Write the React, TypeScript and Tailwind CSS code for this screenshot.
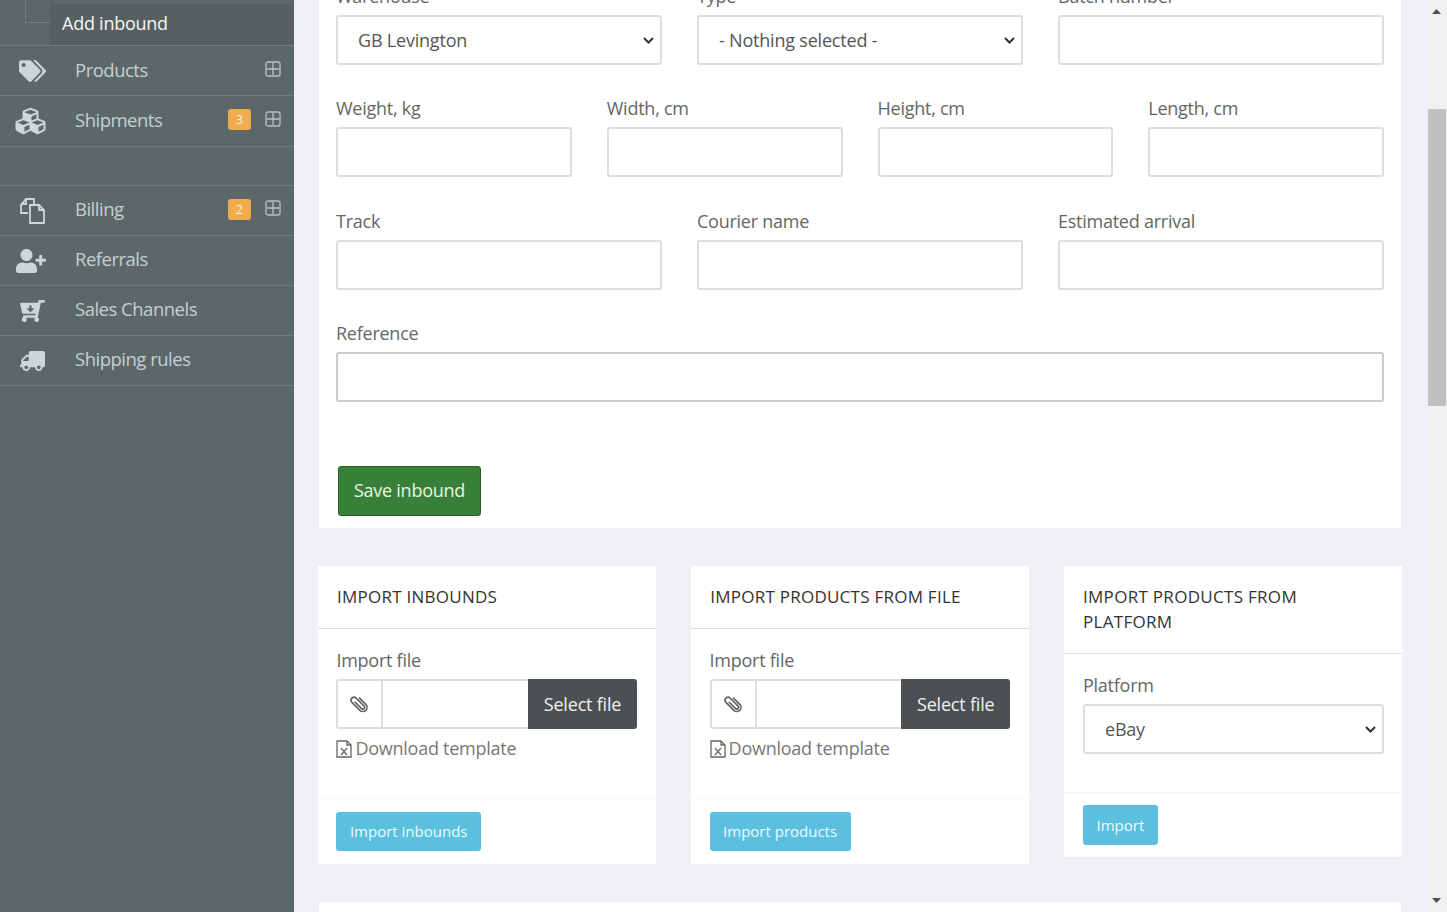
import React from 'react';
import { FaTags, FaCubes, FaUserPlus, FaCartArrowDown, FaTruck } from 'react-icons/fa';

const BillingIcon = () => (
  <svg className="h-[26px] w-[27px]" viewBox="0 0 27 26" fill="none" stroke="currentColor" strokeWidth="1.8">
    <path d="M9 15H2V7l5-6h8v6" />
    <path d="M7 1v5H2" />
    <path d="M11 7h9l5 5v13H11z" />
    <path d="M20 7v5h5" />
  </svg>
);

const PlusBox = ({ className }: { className: string }) => (
  <svg className={className} viewBox="0 0 16 16" fill="none" stroke="#b9c4c7" strokeWidth="1.3">
    <rect x="1" y="1" width="14" height="14" rx="2" />
    <path d="M8 2v12M2 8h12" />
  </svg>
);

const ExcelFile = () => (
  <svg className="mr-[3px] h-[18px] w-[16px] text-[#666]" viewBox="0 0 16 18" fill="none" stroke="currentColor" strokeWidth="1.3">
    <path d="M1 1h10l4 4v12H1z" />
    <path d="M11 1v4h4" />
    <path d="M5 8l6 7M11 8l-6 7" strokeWidth="1.2" />
  </svg>
);

const ClipIcon = () => (
  <svg className="h-[22px] w-[19px] -rotate-45" viewBox="0 0 16 18" fill="none" stroke="#666" strokeWidth="1.4">
    <path d="M6.5 5v8a1.5 1.5 0 0 0 3 0V3.5a2.5 2.5 0 0 0-5 0V13a3.5 3.5 0 0 0 7 0V5" />
  </svg>
);

const menuTop = [
  { label: 'Products', icon: <FaTags className="h-[26px] w-[27px]" />, plus: true, h: 'h-[50px]' },
  { label: 'Shipments', icon: <FaCubes className="-ml-[4px] h-[30px] w-[33px]" />, badge: '3', plus: true, h: 'h-[51px]' },
];

const menuBottom = [
  { label: 'Billing', icon: <BillingIcon />, badge: '2', plus: true, plusTop: 'top-[14px]', textMb: 'mb-[4px]' },
  { label: 'Referrals', icon: <FaUserPlus className="-ml-[2px] h-[24px] w-[30px]" />, textMb: 'mb-[4px]' },
  { label: 'Sales Channels', icon: <FaCartArrowDown className="h-[22px] w-[25px] -scale-x-100" />, textMb: 'mb-[4px]' },
  { label: 'Shipping rules', icon: <FaTruck className="h-[22px] w-[25px] -scale-x-100" />, textMb: 'mb-[4px]' },
];

const MenuRow = ({ item, h = 'h-[50px]' }: { item: any; h?: string }) => (
  <div className={`relative flex items-center border-b border-[#6f7d80] ${h}`}>
    <div className="flex w-[75px] shrink-0 justify-center pl-[2px] pr-[13px] text-[#ced6d8]">{item.icon}</div>
    <span className={`${item.textMb || 'mb-[2px]'} text-[18.5px] tracking-[-0.5px] text-[#c6d0d2]`}>{item.label}</span>
    {item.badge && (
      <span className="absolute left-[228px] top-[13px] flex h-[21px] w-[23px] items-center justify-center rounded-[3px] bg-[#f0ad4e] text-[12px] text-[#fbeedb]">
        {item.badge}
      </span>
    )}
    {item.plus && <PlusBox className={`absolute left-[265px] h-[16px] w-[16px] ${item.plusTop || 'top-[15px]'}`} />}
  </div>
);

const SelectBox = ({ value }: { value: string }) => (
  <div className="relative flex h-[50px] items-center rounded-[3px] border-2 border-[#ddd] bg-white pl-[20px] text-[18px] tracking-[-0.2px] text-[#555]">
    {value}
    <svg className="absolute right-[6px] top-[20px] h-[7px] w-[11px]" viewBox="0 0 11 7">
      <path d="M1 1l4.5 4.5L10 1" fill="none" stroke="#333" strokeWidth="2" />
    </svg>
  </div>
);

const Field = ({ label, select, strong }: { label: string; select?: string; strong?: boolean }) => (
  <div className="flex-1">
    <label className="mb-[6px] block h-[25px] text-[18px] leading-[25px] tracking-[-0.25px] text-[#666]">{label}</label>
    {select ? (
      <SelectBox value={select} />
    ) : (
      <div className={`h-[50px] rounded-[3px] border-2 bg-white ${strong ? 'border-[#ccc]' : 'border-[#ddd]'}`} />
    )}
  </div>
);

const ImportFile = ({ button }: { button: string }) => (
  <div className="flex h-[235px] flex-col">
    <div className="flex-1 pl-[18.4px] pr-[19px] pt-[19px]">
      <div className="text-[18px] leading-[25px] tracking-[-0.25px] text-[#666]">Import file</div>
      <div className="mt-[6px] flex h-[50px]">
        <div className="flex w-[47px] items-center justify-center rounded-l-[3px] border-2 border-[#ddd]">
          <ClipIcon />
        </div>
        <div className="flex-1 border-y-2 border-[#ddd]" />
        <div className="flex w-[109px] items-center justify-center rounded-r-[3px] bg-[#4a5053] text-[18px] tracking-[-0.2px] text-[#f0f0f0]">Select file</div>
      </div>
      <div className="mt-[7px] flex h-[25px] items-center text-[18px] tracking-[-0.25px] text-[#777]">
        <ExcelFile />
        Download template
      </div>
    </div>
    <div className="flex h-[66px] items-start border-t border-[#f6f6f6] px-[18.4px] pt-[13px]">
      <span className="flex h-[39px] items-center rounded-[3px] bg-[#5bc0de] px-[13.5px] text-[15px] text-[#eefaff]">{button}</span>
    </div>
  </div>
);

export default function App() {
  return (
    <div className="flex h-[912px] overflow-hidden bg-[#f0f1f6] font-['Open_Sans',sans-serif]">
      <aside className="w-[294px] shrink-0 bg-[#5b6769]">
        <div className="relative flex h-[46px] items-end border-b border-[#6f7d80] pl-[50px] pt-[4px]">
          <div className="absolute left-[25px] top-0 h-[23px] w-[25px] border-b border-l border-dotted border-[#87959a]" />
          <div className="flex h-full w-full items-center bg-[#575f62] pl-[12px] text-[18px] tracking-[-0.25px] text-[#f4f6f6]">
            <span className="mb-[2px]">Add inbound</span>
          </div>
        </div>
        {menuTop.map((m) => (
          <MenuRow key={m.label} item={m} h={m.h} />
        ))}
        <div className="h-[39px] border-b border-[#6f7d80]" />
        {menuBottom.map((m) => (
          <MenuRow key={m.label} item={m} />
        ))}
      </aside>

      <main className="min-w-0 flex-1 pl-[24px] pr-[25px]">
        <div className="-mt-[16px] flex flex-col gap-[38px]">
          <section className="ml-[1px] mr-[2px] h-[544px] bg-white px-[17px]">
            <div className="flex gap-[35px]">
              <Field label="Warehouse" select="GB Levington" />
              <Field label="Type" select="- Nothing selected -" />
              <Field label="Batch number" />
            </div>
            <div className="mt-[31px] flex gap-[35px]">
              <Field label="Weight, kg" />
              <Field label="Width, cm" />
              <Field label="Height, cm" />
              <Field label="Length, cm" />
            </div>
            <div className="mt-[32px] flex gap-[35px]">
              <Field label="Track" />
              <Field label="Courier name" />
              <Field label="Estimated arrival" />
            </div>
            <div className="mt-[31px]">
              <Field label="Reference" strong />
            </div>
            <button className="ml-[2px] mt-[64px] h-[50px] w-[143px] rounded-[3px] border border-[#2b5c2d] bg-[#388038] pb-[2px] text-[18px] tracking-[-0.25px] text-[#e6f7e0]">
              Save inbound
            </button>
          </section>

          <div className="flex items-start gap-[35.2px]">
            <section className="w-[338px] bg-white">
              <h3 className="flex h-[63px] items-center border-b border-[#ddd] px-[19px] text-[17px] font-normal tracking-[0.25px] text-[#333]">IMPORT INBOUNDS</h3>
              <ImportFile button="Import inbounds" />
            </section>
            <section className="w-[338px] bg-white">
              <h3 className="flex h-[63px] items-center border-b border-[#ddd] px-[19px] text-[17px] font-normal tracking-[0.25px] text-[#333]">IMPORT PRODUCTS FROM FILE</h3>
              <ImportFile button="Import products" />
            </section>
            <section className="w-[338px] bg-white">
              <h3 className="flex h-[88px] items-center border-b border-[#ddd] pb-[2px] pl-[18.6px] pr-[19px] text-[17px] font-normal leading-[25px] tracking-[0.3px] text-[#333]">IMPORT PRODUCTS FROM PLATFORM</h3>
              <div className="h-[138px] pl-[18.6px] pr-[18px] pt-[19px]">
                <div className="mb-[6px] text-[18px] leading-[25px] tracking-[-0.25px] text-[#666]">Platform</div>
                <SelectBox value="eBay" />
              </div>
              <div className="h-[65px] border-t border-[#f6f6f6] pl-[18.6px] pr-[19px] pt-[12px]">
                <span className="inline-flex h-[40px] items-center rounded-[3px] bg-[#5bc0de] px-[13.5px] text-[15px] text-[#eefaff]">Import</span>
              </div>
            </section>
          </div>

          <section className="ml-[1px] mr-[2px] h-[100px] bg-white" />
        </div>
      </main>

      <div className="relative w-[19px] shrink-0 bg-[#f1f1f1]">
        <svg className="absolute left-[4px] top-[9px] h-[5px] w-[9px]" viewBox="0 0 9 5"><path d="M4.5 0L9 5H0z" fill="#505050" /></svg>
        <div className="absolute left-0 top-[109px] h-[297px] w-[18px] bg-[#c1c1c1]" />
        <svg className="absolute bottom-[9px] left-[4px] h-[5px] w-[9px]" viewBox="0 0 9 5"><path d="M0 0h9L4.5 5z" fill="#505050" /></svg>
      </div>
    </div>
  );
}
